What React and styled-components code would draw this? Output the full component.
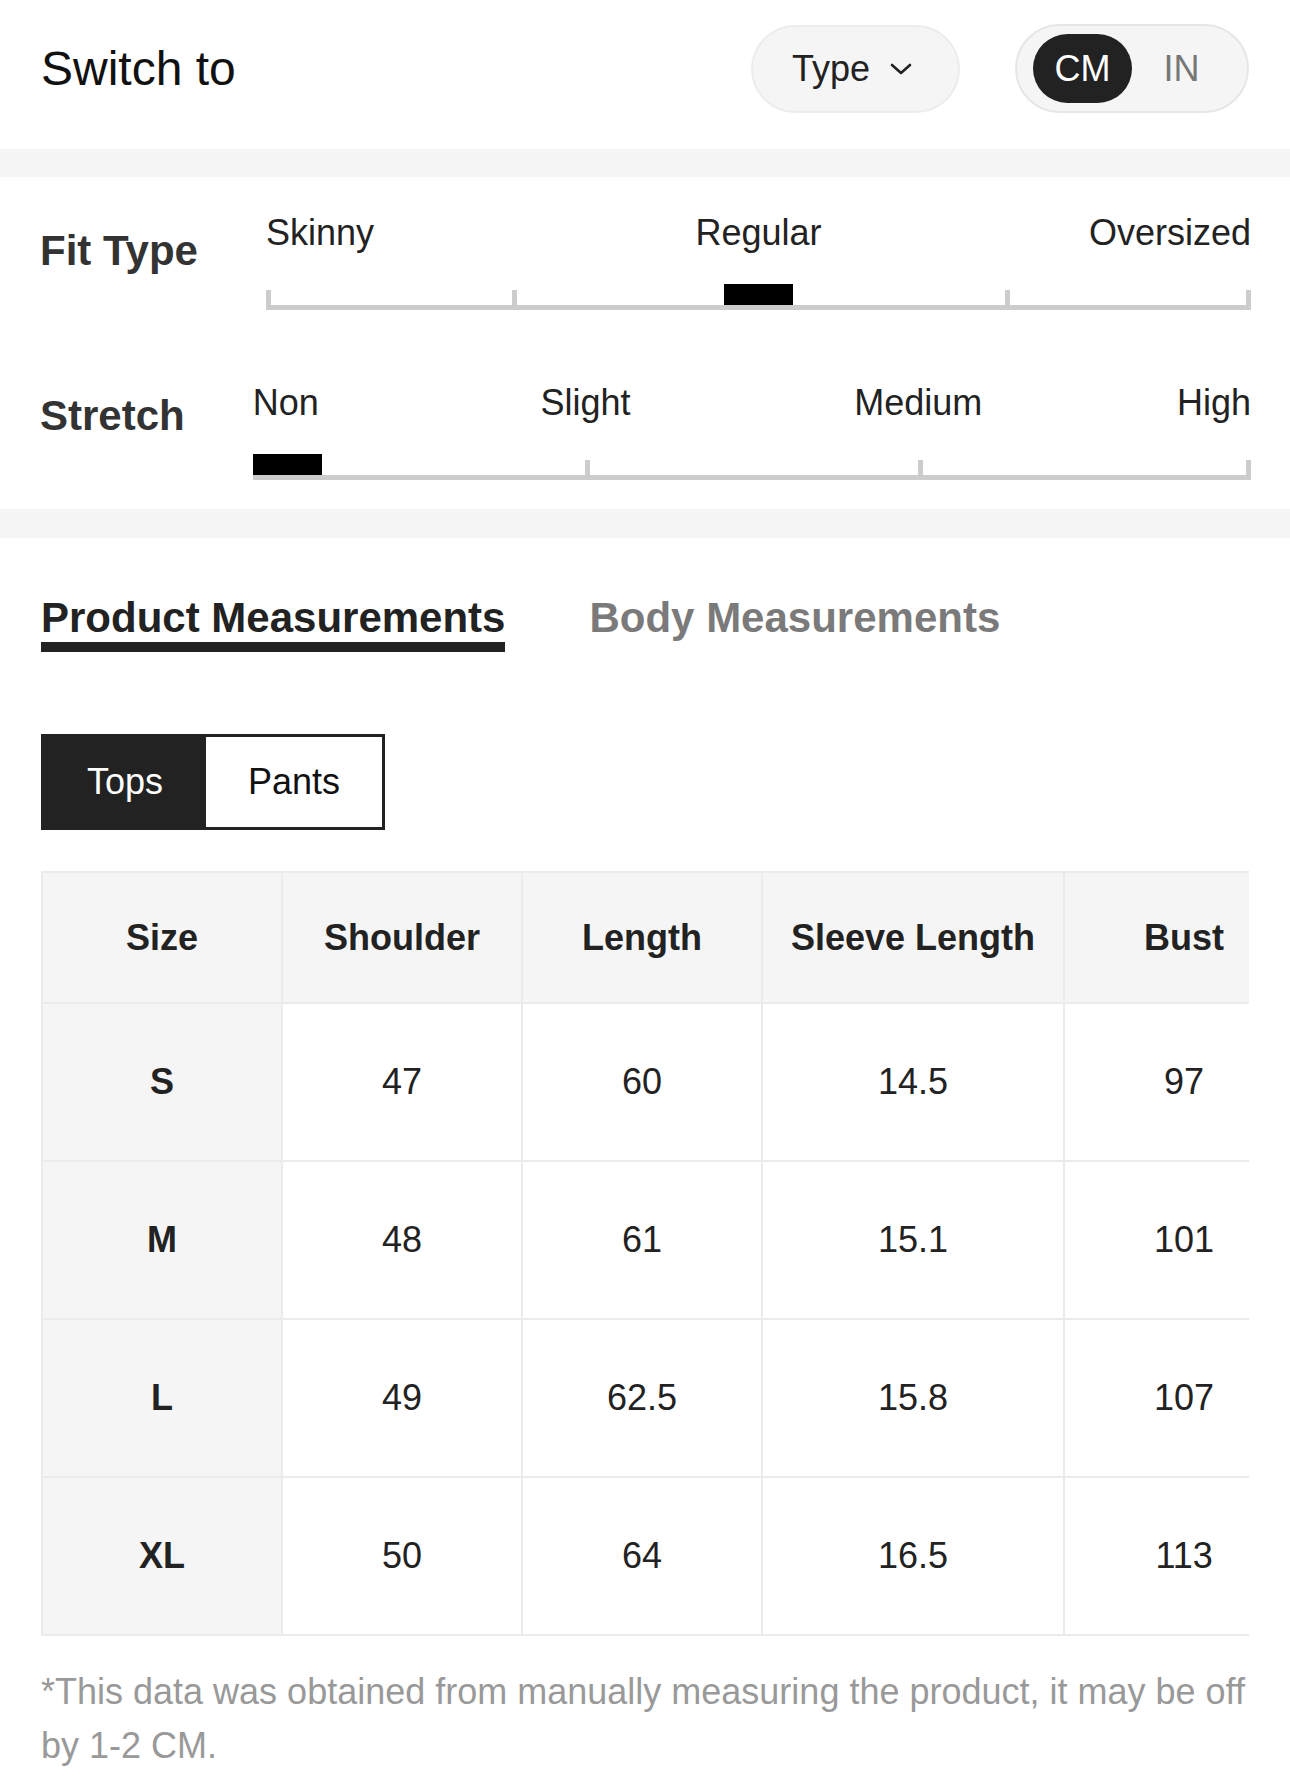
import React from "react";
import styled, { createGlobalStyle } from "styled-components";

const Global = createGlobalStyle`
  html, body { margin: 0; padding: 0; background: #fff; }
  body { font-family: "Liberation Sans", Arial, Helvetica, sans-serif; color: #222; }
  * { box-sizing: border-box; }
`;

const Page = styled.div`
  width: 1290px;
  background: #fff;
`;

const Header = styled.header`
  display: flex;
  align-items: center;
  padding: 24px 41px 36px 41px;
`;

const Title = styled.h1`
  flex: 1;
  margin: 0;
  font-size: 48px;
  font-weight: 400;
  line-height: 1.15;
  color: #111;
`;

const TypeButton = styled.button`
  display: flex;
  align-items: center;
  gap: 20px;
  height: 88px;
  padding: 0 46px 0 39px;
  border: 2px solid #ececec;
  border-radius: 44px;
  background: #f5f5f5;
  font-family: inherit;
  font-size: 36px;
  color: #222;
  margin-right: 55px;
`;

const UnitSwitch = styled.div`
  display: flex;
  padding: 8px 16px;
  border: 2px solid #e6e6e6;
  border-radius: 45px;
  background: #f5f5f5;
`;

const UnitOption = styled.div`
  width: 99px;
  height: 69px;
  display: flex;
  align-items: center;
  justify-content: center;
  border-radius: 35px;
  font-size: 36px;
  background: ${(p) => (p.$active ? "#222" : "transparent")};
  color: ${(p) => (p.$active ? "#fff" : "#777")};
`;

const Band = styled.div`
  height: ${(p) => p.$h}px;
  background: #f5f5f5;
`;

const FitSection = styled.section`
  display: flex;
  flex-direction: column;
  gap: 72px;
  padding: 35px 39px 29px 40px;
`;

const ScaleRow = styled.div`
  display: flex;
  align-items: flex-start;
  gap: 68px;
`;

const RowLabel = styled.div`
  margin-top: ${(p) => p.$offset}px;
  font-size: 42px;
  font-weight: 700;
  line-height: 1.15;
  color: #333;
  white-space: nowrap;
`;

const Scale = styled.div`
  flex: 1;
  display: flex;
  flex-direction: column;
  gap: 31px;
`;

const ScaleLabels = styled.div`
  display: flex;
  justify-content: space-between;
  height: 41px;
`;

const ScaleLabel = styled.div`
  width: 0;
  display: flex;
  justify-content: ${(p) => p.$align};
  white-space: nowrap;
  font-size: 36px;
  line-height: 41px;
  color: #222;
`;

const Track = styled.div`
  position: relative;
  height: 26px;
  display: flex;
  align-items: flex-end;
  border-bottom: 5px solid #ccc;
`;

const Segment = styled.div`
  flex: 0 0 ${(p) => p.$w}%;
  height: 15px;
  border-left: 5px solid #ccc;
  border-right: ${(p) => (p.$last ? "5px solid #ccc" : "0")};
`;

const Marker = styled.div`
  position: absolute;
  top: 0;
  left: calc(${(p) => p.$pos}% - ${(p) => (p.$pos / 100) * 69}px);
  width: 69px;
  height: 21px;
  background: #000;
`;

const MeasureSection = styled.section`
  padding: 56px 41px 0 41px;
`;

const Tabs = styled.div`
  display: flex;
  gap: 84px;
`;

const Tab = styled.div`
  font-size: 42px;
  font-weight: 700;
  line-height: 1.15;
  color: ${(p) => (p.$active ? "#222" : "#7a7a7a")};
  border-bottom: 10px solid ${(p) => (p.$active ? "#222" : "transparent")};
  white-space: nowrap;
`;

const CategorySwitch = styled.div`
  display: inline-flex;
  margin-top: 82px;
  border: 3px solid #222;
`;

const CategoryButton = styled.div`
  height: 90px;
  padding: 0 ${(p) => (p.$active ? 43 : 42)}px;
  display: flex;
  align-items: center;
  font-size: 36px;
  background: ${(p) => (p.$active ? "#222" : "#fff")};
  color: ${(p) => (p.$active ? "#fff" : "#111")};
`;

const TableWrap = styled.div`
  margin-top: 41px;
  width: 100%;
  overflow: hidden;
`;

const Table = styled.table`
  width: max-content;
  border-collapse: collapse;
  font-size: 36px;
  color: #222;
`;

const HeadCell = styled.th`
  width: 240px;
  height: 131px;
  padding: 0 28px;
  font-weight: 700;
  white-space: nowrap;
  text-align: center;
  background: #f5f5f5;
  border: 2px solid #ebebeb;
`;

const Cell = styled.td`
  width: 240px;
  height: 158px;
  padding: 0 28px;
  text-align: center;
  white-space: nowrap;
  font-weight: ${(p) => (p.$head ? 700 : 400)};
  background: ${(p) => (p.$head ? "#f5f5f5" : "#fff")};
  border: 2px solid #ebebeb;
`;

const Note = styled.p`
  margin: 29px 0 0 0;
  font-size: 36px;
  line-height: 54px;
  color: #999;
  padding-bottom: 6px;
`;

const Chevron = () => (
  <svg width="22" height="12" viewBox="0 0 22 12" fill="none">
    <polyline points="2,2 11,10 20,2" stroke="#222" strokeWidth="2.6" strokeLinecap="round" strokeLinejoin="round" />
  </svg>
);

const scales = [
  {
    label: "Fit Type",
    labels: ["Skinny", "Regular", "Oversized"],
    segments: [25, 50, 25],
    pos: 50,
    offset: 15,
  },
  {
    label: "Stretch",
    labels: ["Non", "Slight", "Medium", "High"],
    segments: [33.333, 33.333, 33.334],
    pos: 0,
    offset: 10,
  },
];

const columns = ["Size", "Shoulder", "Length", "Sleeve Length", "Bust"];
const rows = [
  ["S", "47", "60", "14.5", "97"],
  ["M", "48", "61", "15.1", "101"],
  ["L", "49", "62.5", "15.8", "107"],
  ["XL", "50", "64", "16.5", "113"],
];

export default function App() {
  return (
    <Page>
      <Global />
      <Header>
        <Title>Switch to</Title>
        <TypeButton>
          Type
          <Chevron />
        </TypeButton>
        <UnitSwitch>
          <UnitOption $active>CM</UnitOption>
          <UnitOption>IN</UnitOption>
        </UnitSwitch>
      </Header>
      <Band $h={28} />
      <FitSection>
        {scales.map((s) => (
          <ScaleRow key={s.label}>
            <RowLabel $offset={s.offset}>{s.label}</RowLabel>
            <Scale>
              <ScaleLabels>
                {s.labels.map((l, i) => (
                  <ScaleLabel
                    key={l}
                    $align={i === 0 ? "flex-start" : i === s.labels.length - 1 ? "flex-end" : "center"}
                  >
                    {l}
                  </ScaleLabel>
                ))}
              </ScaleLabels>
              <Track>
                {s.segments.map((w, i) => (
                  <Segment key={i} $w={w} $last={i === s.segments.length - 1} />
                ))}
                <Marker $pos={s.pos} />
              </Track>
            </Scale>
          </ScaleRow>
        ))}
      </FitSection>
      <Band $h={29} />
      <MeasureSection>
        <Tabs>
          <Tab $active>Product Measurements</Tab>
          <Tab>Body Measurements</Tab>
        </Tabs>
        <CategorySwitch>
          <CategoryButton $active>Tops</CategoryButton>
          <CategoryButton>Pants</CategoryButton>
        </CategorySwitch>
        <TableWrap>
          <Table>
            <thead>
              <tr>
                {columns.map((c) => (
                  <HeadCell key={c}>{c}</HeadCell>
                ))}
              </tr>
            </thead>
            <tbody>
              {rows.map((r) => (
                <tr key={r[0]}>
                  {r.map((v, i) => (
                    <Cell key={i} $head={i === 0}>
                      {v}
                    </Cell>
                  ))}
                </tr>
              ))}
            </tbody>
          </Table>
        </TableWrap>
        <Note>*This data was obtained from manually measuring the product, it may be off by 1-2 CM.</Note>
      </MeasureSection>
    </Page>
  );
}
